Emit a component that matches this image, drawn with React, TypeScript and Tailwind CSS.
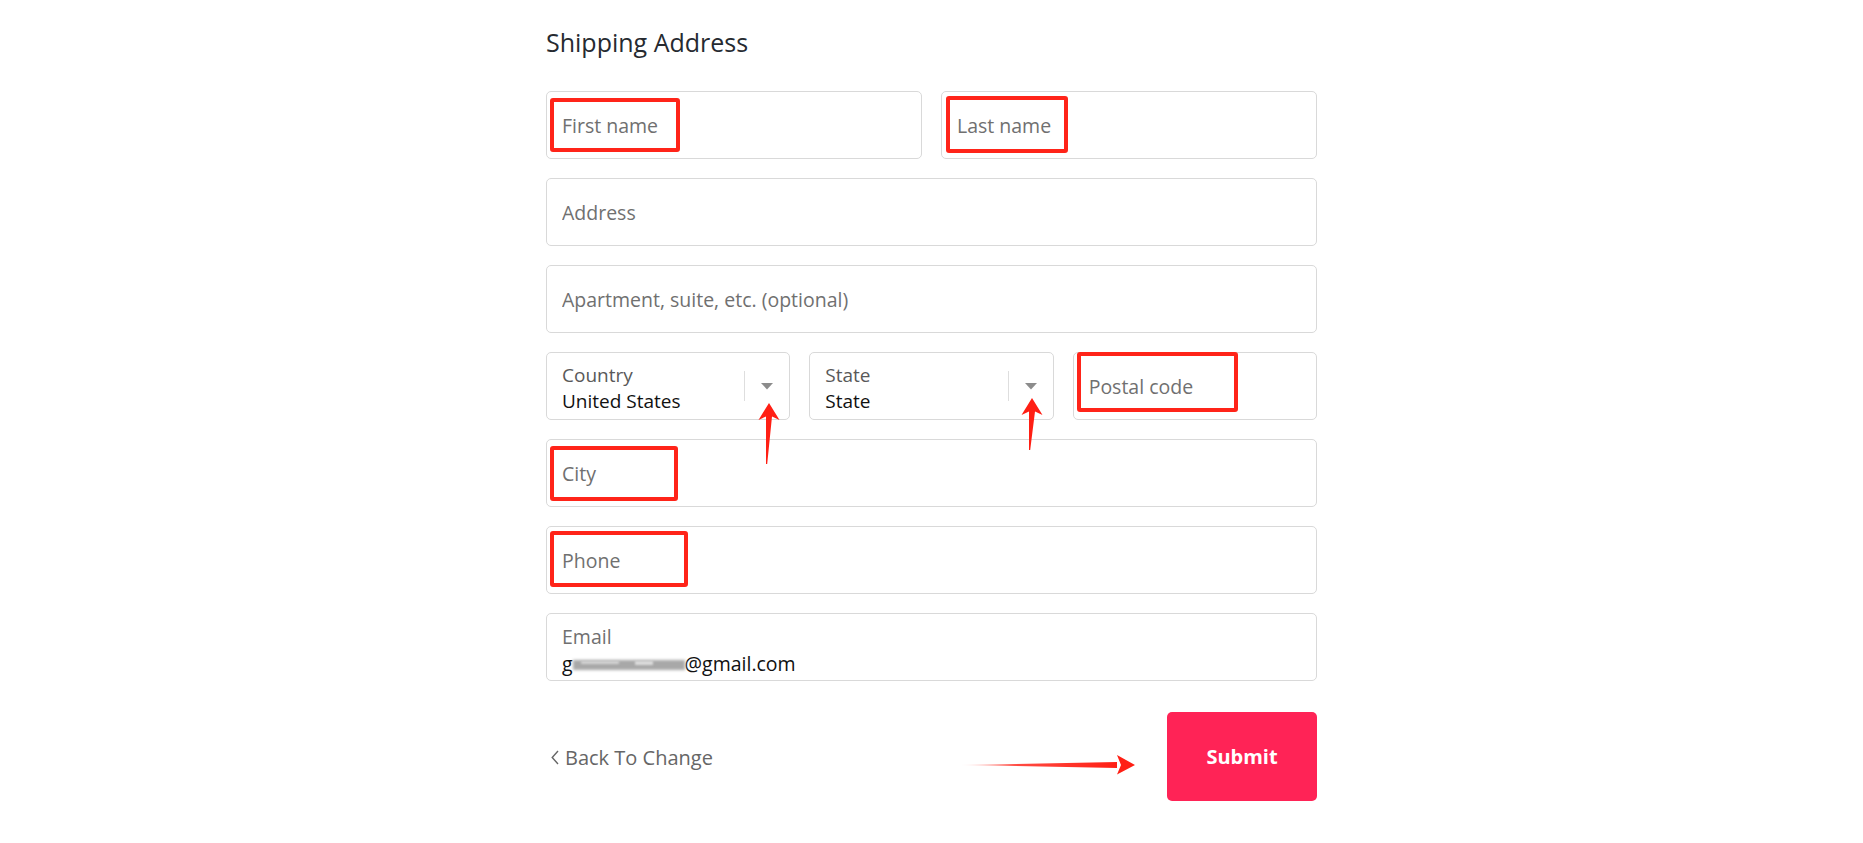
import React from 'react';

const font = "font-['Open_Sans','Noto_Sans',sans-serif]";

interface Mark {
  left: number;
  top: number;
  width: number;
  height: number;
}

interface TextFieldProps {
  placeholder: string;
  className?: string;
  mark?: Mark; // red annotation box drawn over the field
}

const TextField = ({ placeholder, className = '', mark }: TextFieldProps) => (
  <div className={`relative h-[68px] rounded-[5px] border border-[#d9d9d9] bg-white ${className}`}>
    <input
      type="text"
      placeholder={placeholder}
      className="h-full w-full rounded-[5px] bg-transparent px-[15px] text-[19.5px] leading-[25px] text-[#111] outline-none placeholder:text-[#707070]"
    />
    {mark && (
      <div
        className="pointer-events-none absolute rounded-[3px] border-[4px] border-[#ff2419]"
        style={{ left: mark.left, top: mark.top, width: mark.width, height: mark.height }}
      />
    )}
  </div>
);

interface SelectFieldProps {
  label: string;
  value: string;
}

const SelectField = ({ label, value }: SelectFieldProps) => (
  <div className="flex h-[68px] flex-1 items-center rounded-[5px] border border-[#d9d9d9] bg-white">
    <div className="flex-1 pl-[15px] pt-[4px]">
      <div className="text-[19px] leading-[26px] text-[#595959]">{label}</div>
      <div className="text-[19px] leading-[26px] text-[#111]">{value}</div>
    </div>
    <div className="h-[30px] w-px bg-[#dedede]" />
    <div className="flex w-[44px] justify-center">
      <svg width="12" height="7" viewBox="0 0 12 7">
        <polygon points="0,0 12,0 6,6.5" fill="#8c8c8c" />
      </svg>
    </div>
  </div>
);

const UpArrow = ({ left, top, length }: { left: number; top: number; length: number }) => (
  <svg
    className="pointer-events-none absolute"
    style={{ left, top }}
    width="30"
    height={length}
    viewBox={`0 0 30 ${length}`}
  >
    <polygon
      points={`15,2 25.5,19 18,15.5 13.2,${length - 1} 12,${length - 1} 12,15.5 4.5,19`}
      fill="#ff1f14"
    />
  </svg>
);

export default function App() {
  return (
    <div className={`min-h-screen bg-white ${font}`}>
      <div className="relative mx-auto w-[771px] pt-[26px]">
        <h2 className="text-[25px] leading-[32px] font-normal text-[#262a30]">Shipping Address</h2>

        <div className="mt-[33px] flex flex-col gap-[19px]">
          <div className="flex gap-[19px]">
            <TextField placeholder="First name" className="flex-1" mark={{ left: 3, top: 6, width: 130, height: 54 }} />
            <TextField placeholder="Last name" className="flex-1" mark={{ left: 4, top: 4, width: 122, height: 57 }} />
          </div>
          <TextField placeholder="Address" />
          <TextField placeholder="Apartment, suite, etc. (optional)" />
          <div className="flex gap-[19px]">
            <SelectField label="Country" value="United States" />
            <SelectField label="State" value="State" />
            <TextField placeholder="Postal code" className="flex-1" mark={{ left: 3, top: -1, width: 161, height: 60 }} />
          </div>
          <TextField placeholder="City" mark={{ left: 3, top: 6, width: 128, height: 55 }} />
          <TextField placeholder="Phone" mark={{ left: 3, top: 4, width: 138, height: 56 }} />
          <div className="h-[68px] rounded-[5px] border border-[#d9d9d9] bg-white pl-[15px] pt-[9px]">
            <div className="text-[19.5px] leading-[27px] text-[#707070]">Email</div>
            <div className="flex items-center text-[19.5px] leading-[27px] text-[#111]">
              <span>g</span>
              <span className="relative mt-[3px] inline-block h-[10px] w-[112px]">
                <span className="absolute inset-0 bg-[#a8a8a8] blur-[1.5px]" />
                <span className="absolute left-[8px] top-[1px] h-[3px] w-[38px] bg-[#d4d4d4] blur-[1px]" />
                <span className="absolute left-[62px] top-[1px] h-[4px] w-[18px] bg-[#dcdcdc] blur-[1px]" />
              </span>
              <span>@gmail.com</span>
            </div>
          </div>
        </div>

        <div className="mt-[31px] flex items-center justify-between pb-[40px]">
          <button className="flex items-center gap-[6px] pl-[5px] pt-[2px] text-[20px] leading-[25px] text-[#666]">
            <svg width="8" height="15" viewBox="0 0 8 15" fill="none">
              <path d="M7 1L1.2 7.5L7 14" stroke="#666" strokeWidth="1.4" />
            </svg>
            <span>Back To Change</span>
          </button>
          <button className="flex h-[89px] w-[150px] items-center justify-center rounded-[5px] bg-[#ff2356] text-[20px] font-bold text-white">
            Submit
          </button>
        </div>

        {/* annotation arrows */}
        <UpArrow left={208} top={401} length={64} />
        <UpArrow left={471} top={396} length={55} />
        <svg
          className="pointer-events-none absolute"
          style={{ left: 411, top: 755 }}
          width="180"
          height="20"
          viewBox="0 0 180 20"
        >
          <defs>
            <linearGradient id="shaft" x1="0" y1="0" x2="1" y2="0">
              <stop offset="0" stopColor="#ff1f14" stopOpacity="0" />
              <stop offset="0.35" stopColor="#ff1f14" stopOpacity="0.8" />
              <stop offset="1" stopColor="#ff1f14" />
            </linearGradient>
          </defs>
          <polygon points="2,10 160,7 160,13" fill="url(#shaft)" />
          <polygon points="160,0 178,10 160,19.5 164,10" fill="#ff1f14" />
        </svg>
      </div>
    </div>
  );
}
